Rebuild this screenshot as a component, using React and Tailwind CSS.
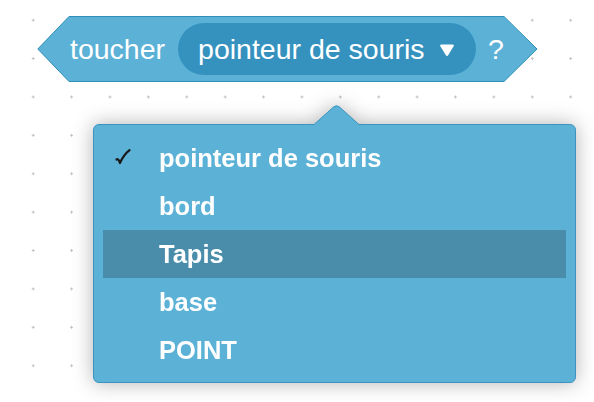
const items = ["pointeur de souris", "bord", "Tapis", "base", "POINT"];

function Hexagon() {
  return (
    <svg className="absolute inset-0" width="501" height="66" viewBox="0 0 501 66">
      <path
        d="M32 0.5 H467 L500 33 L467 65.5 H32 L0.8 33 Z"
        fill="#5cb1d6"
        stroke="#2e8eb8"
        strokeWidth="1"
        strokeLinejoin="round"
      />
    </svg>
  );
}

function Caret() {
  return (
    <svg width="16" height="14" viewBox="0 0 16 14">
      <path
        d="M2.2 1.5 H13.8 Q15.6 1.5 14.6 3.2 L9.3 12 Q8 13.8 6.7 12 L1.4 3.2 Q0.4 1.5 2.2 1.5 Z"
        fill="#ffffff"
      />
    </svg>
  );
}

function Check() {
  return (
    <svg width="16" height="20" viewBox="0 0 16 20">
      <path
        d="M1.5 11.5 Q3 10.5 4.2 13 L5 15 Q8.5 7 14.5 2.2"
        fill="none"
        stroke="#1a1a1a"
        strokeWidth="2.2"
        strokeLinecap="round"
        strokeLinejoin="round"
      />
    </svg>
  );
}

export default function App() {
  return (
    <div
      className="relative h-[402px] w-[594px] overflow-hidden bg-white bg-[radial-gradient(circle,#b9b9b9_0.9px,transparent_1.4px)] bg-[size:38.4px_38.4px] bg-[position:14px_1px] pt-[16px]"
      style={{ fontFamily: '"Liberation Sans", Arial, sans-serif' }}
    >
      <div className="relative ml-[37px] flex h-[66px] w-[501px] items-center">
        <Hexagon />
        <div className="relative flex items-center pl-[33px] text-[28.5px] leading-none text-white">
          <span>toucher</span>
          <div className="ml-[13px] flex h-[52px] w-[298px] items-center rounded-full bg-[#3592bf] pl-[20px] pr-[20px]">
            <span>pointeur de souris</span>
            <span className="ml-[14px] mt-[2px]">
              <Caret />
            </span>
          </div>
          <span className="ml-[12px]">?</span>
        </div>
      </div>

      <div className="ml-[93px] mt-[42px] drop-shadow-[0_0_10px_rgba(0,0,0,0.3)]">
        <div className="relative h-[259px] w-[483px] rounded-[6px] border border-[#3a94bf] bg-[#5cb1d6] px-[9px] py-[9px]">
          <svg className="absolute -top-[20px] left-[219px]" width="47" height="21" viewBox="0 0 47 21">
            <path d="M0 20.5 L20.5 2 Q23.5 -0.6 26.5 2 L47 20.5" fill="#5cb1d6" stroke="#3a94bf" strokeWidth="1" />
            <rect x="0" y="20" width="47" height="2" fill="#5cb1d6" />
          </svg>
          {items.map((item, i) => (
            <div
              key={item}
              className={`flex h-[48px] items-center text-[25.5px] font-bold text-white ${i === 2 ? "bg-[#4a8dab]" : ""}`}
            >
              <span className="flex w-[56px] items-center pl-[12px]">{i === 0 ? <Check /> : null}</span>
              <span>{item}</span>
            </div>
          ))}
        </div>
      </div>
    </div>
  );
}
